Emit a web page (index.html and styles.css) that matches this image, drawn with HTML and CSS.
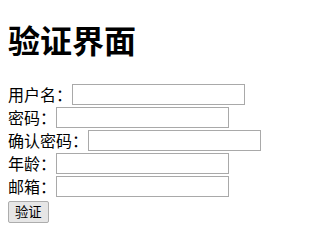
FILE: index.html
```html
<!DOCTYPE html>
<html lang="zh-CN">
<head>
<meta charset="utf-8">
<title>验证界面</title>
<link rel="stylesheet" href="styles.css">
</head>
<body>
<h1 class="title">验证界面</h1>
<form class="form">
  <div class="row"><label class="label">用户名：</label><input type="text" class="field"></div>
  <div class="row"><label class="label">密码：</label><input type="password" class="field"></div>
  <div class="row"><label class="label">确认密码：</label><input type="password" class="field"></div>
  <div class="row"><label class="label">年龄：</label><input type="text" class="field"></div>
  <div class="row"><label class="label">邮箱：</label><input type="text" class="field"></div>
  <button type="button" class="btn">验证</button>
</form>
</body>
</html>
```
FILE: styles.css
```css
html {
  margin: 0;
  padding: 0;
}
body {
  margin: 0;
  padding: 0 8px 8px;
  font-family: "Noto Sans CJK SC", "Noto Sans", sans-serif;
  color: #000;
  background: #fff;
}
.title {
  margin: 0;
  padding: 19px 0 23px;
  font-size: 32px;
  line-height: 41px;
  font-weight: bold;
}
.form {
  margin: 0;
}
.row {
  display: flex;
  align-items: center;
  height: 23px;
}
.label {
  font-size: 16px;
  line-height: 23px;
}
.field {
  box-sizing: border-box;
  width: 173px;
  height: 21px;
  margin: 0;
  padding: 1px 2px;
  border: 1px solid #a9a9a9;
  font-size: 13px;
  background: #fff;
}
.btn {
  box-sizing: border-box;
  height: 22px;
  margin: 0;
  padding: 0 6px;
  border: 1px solid #adadad;
  border-radius: 2px;
  background: #e6e6e6;
  font-family: "Noto Sans CJK SC", sans-serif;
  font-size: 13.33px;
  line-height: 18px;
  color: #000;
}
```
